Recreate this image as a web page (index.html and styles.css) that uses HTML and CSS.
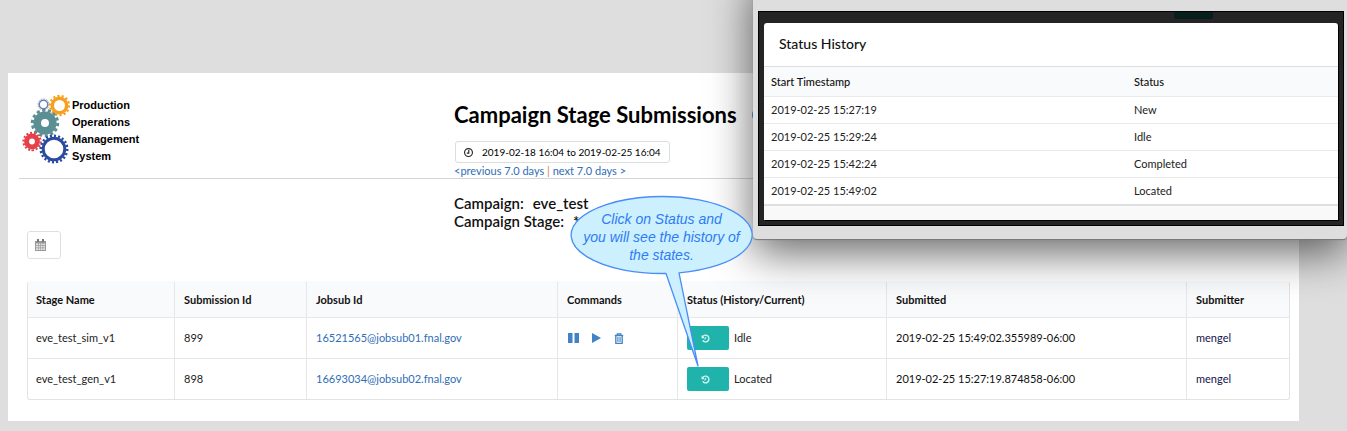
FILE: index.html
```html
<!DOCTYPE html>
<html lang="en">
<head>
<meta charset="utf-8">
<title>Campaign Stage Submissions</title>
<link rel="stylesheet" href="styles.css">
</head>
<body>
<svg class="sprite" aria-hidden="true">
  <symbol id="history" viewBox="0 0 16 16"><path d="M3.2 4.6A6 6 0 1 1 3 11.2" fill="none" stroke="currentColor" stroke-width="2.400"/><path d="M1 1.6v6h6z" fill="currentColor"/><path d="M8.4 4.8v4H5.6" fill="none" stroke="currentColor" stroke-width="1.500"/></symbol>
</svg>
<main class="page">
  <header class="page-header">
    <div class="logo">
      <svg class="gears" width="48" height="72" viewBox="22 94 48 72" aria-hidden="true">
        <g fill="none">
          <circle cx="43.500" cy="104.500" r="4.300" stroke="#6b80bb" stroke-width="1.600"/>
          <circle cx="43.500" cy="104.500" r="5.600" stroke="#8fa0cc" stroke-width="1" pathLength="24" stroke-dasharray="1 1"/>
          <circle cx="59.500" cy="105.500" r="7.200" stroke="#f5a11f" stroke-width="3.400"/>
          <circle cx="59.500" cy="105.500" r="9.600" stroke="#f5a11f" stroke-width="2.200" pathLength="28" stroke-dasharray="1 1"/>
          <circle cx="45" cy="123" r="7.800" stroke="#5b8f93" stroke-width="7.600"/>
          <circle cx="45" cy="123" r="12.700" stroke="#5b8f93" stroke-width="3" pathLength="28" stroke-dasharray="1.100 .9"/>
          <circle cx="32" cy="141.500" r="5.400" stroke="#e5414b" stroke-width="5"/>
          <circle cx="32" cy="141.500" r="8.600" stroke="#e5414b" stroke-width="2.200" pathLength="28" stroke-dasharray="1 1"/>
          <circle cx="54" cy="149" r="10.800" stroke="#2b4ba0" stroke-width="3"/>
          <circle cx="54" cy="149" r="13.200" stroke="#2b4ba0" stroke-width="2.600" pathLength="40" stroke-dasharray="1 1"/>
        </g>
      </svg>
      <div class="logo-text"><span>Production</span><span>Operations</span><span>Management</span><span>System</span></div>
    </div>
    <div class="heading">
      <h1>Campaign Stage Submissions <a href="#help" aria-label="Help"><svg width="18" height="18" viewBox="0 0 18 18"><circle cx="9" cy="9" r="8" fill="#4183c4"/></svg></a></h1>
      <button class="range" type="button"><svg width="9" height="9" viewBox="0 0 16 16" fill="none" stroke="#222" stroke-width="2"><circle cx="8" cy="8" r="7"/><path d="M8.500 3.500V9H5"/></svg>2019-02-18 16:04 to 2019-02-25 16:04</button>
      <nav class="pager"><a href="#prev">&lt;previous 7.0 days</a> <span>|</span> <a href="#next">next 7.0 days &gt;</a></nav>
    </div>
  </header>
  <dl class="info">
    <div><dt>Campaign:</dt><dd>eve_test</dd></div>
    <div><dt>Campaign Stage:</dt><dd>*</dd></div>
  </dl>
  <button class="calendar" type="button" aria-label="Choose dates"><svg width="11" height="12" viewBox="0 0 11 12"><path d="M0 2h11v10H0z" fill="#999"/><path d="M2 0h2v3H2zM7 0h2v3H7z" fill="#777"/><path d="M1 4.500h2v1.700H1zM3.600 4.500h1.700v1.700H3.600zM5.900 4.500h1.700v1.700H5.900zM8.200 4.500H10v1.700H8.200zM1 6.900h2v1.700H1zM3.600 6.900h1.700v1.700H3.600zM5.900 6.900h1.700v1.700H5.900zM8.200 6.900H10v1.700H8.200zM1 9.300h2V11H1zM3.600 9.300h1.700V11H3.600zM5.900 9.300h1.700V11H5.900zM8.200 9.300H10V11H8.200z" fill="#e4e4e4"/></svg></button>
  <table class="jobs">
    <colgroup><col class="c-stage"><col class="c-id"><col class="c-jobsub"><col class="c-cmd"><col class="c-status"><col class="c-date"><col class="c-user"></colgroup>
    <thead><tr><th>Stage Name</th><th>Submission Id</th><th>Jobsub Id</th><th>Commands</th><th>Status (History/Current)</th><th>Submitted</th><th>Submitter</th></tr></thead>
    <tbody>
      <tr><td>eve_test_sim_v1</td><td>899</td><td><a href="#job1">16521565@jobsub01.fnal.gov</a></td>
        <td><div class="commands">
          <button type="button" aria-label="Pause"><svg width="11" height="10" viewBox="0 0 11 10"><path d="M0 0h4.500v10H0zM6.500 0H11v10H6.500z" fill="#4183c4"/></svg></button>
          <button type="button" aria-label="Play"><svg width="11" height="10" viewBox="0 0 11 10"><path d="M1 0l9 5-9 5z" fill="#4183c4"/></svg></button>
          <button type="button" aria-label="Delete"><svg width="10" height="11" viewBox="0 0 10 11" fill="none" stroke="#4183c4"><path d="M.8 2.500h8.400M3.300 2.300V.9h3.400v1.400M1.800 2.800v7.500h6.400V2.800" stroke-width="1.300"/><path d="M3.700 4v5M5 4v5M6.300 4v5" stroke-width=".8"/></svg></button>
        </div></td>
        <td><div class="state"><button type="button" aria-label="Status history"><svg width="9" height="9"><use href="#history"/></svg></button>Idle</div></td>
        <td class="strong">2019-02-25 15:49:02.355989-06:00</td><td class="user">mengel</td></tr>
      <tr><td>eve_test_gen_v1</td><td>898</td><td><a href="#job2">16693034@jobsub02.fnal.gov</a></td><td></td>
        <td><div class="state"><button type="button" aria-label="Status history"><svg width="9" height="9"><use href="#history"/></svg></button>Located</div></td>
        <td class="strong">2019-02-25 15:27:19.874858-06:00</td><td class="user">mengel</td></tr>
    </tbody>
  </table>
</main>

<aside class="window">
  <div class="backdrop">
    <span class="dimmed-button"></span>
    <section class="modal">
      <h2>Status History</h2>
      <table class="history">
        <thead><tr><th>Start Timestamp</th><th>Status</th></tr></thead>
        <tbody>
          <tr><td>2019-02-25 15:27:19</td><td>New</td></tr>
          <tr><td>2019-02-25 15:29:24</td><td>Idle</td></tr>
          <tr><td>2019-02-25 15:42:24</td><td>Completed</td></tr>
          <tr><td>2019-02-25 15:49:02</td><td>Located</td></tr>
        </tbody>
      </table>
      <div class="modal-foot"></div>
    </section>
  </div>
</aside>

<div class="callout">
  <svg width="185" height="172" viewBox="0 0 185 172" aria-hidden="true"><path d="M97 78.450A90.500 38.500 0 1 1 110 77.780L129 171z" fill="#ccf0fd" stroke="#4a8df8" stroke-width="1.300" stroke-linejoin="round"/></svg>
  <p>Click on Status and<br>you will see the history of<br>the states.</p>
</div>
</body>
</html>
```
FILE: styles.css
```css
* { box-sizing: border-box; }
body {
  margin: 0;
  padding: 73px 48px 11px 8px;
  position: relative;
  overflow: hidden;
  background: #dedede;
  color: #222;
  font: 11px/16px Lato, sans-serif;
}
button { font: inherit; color: inherit; cursor: pointer; }
a { color: #2f6db5; text-decoration: none; }
svg { display: block; flex: none; }
.sprite { position: absolute; width: 0; height: 0; }

.page { background: #fff; padding: 0 9px 21px 11px; }
.page-header {
  display: grid;
  grid-template-columns: 435px 1fr;
  height: 106px;
  border-bottom: 1px solid #d4d4d5;
}
.logo { display: flex; align-items: flex-start; gap: 2px; padding: 21px 0 0 3px; }
.logo-text {
  display: flex;
  flex-direction: column;
  padding-top: 3px;
  font: bold 11px/17px "Liberation Sans", Arial, sans-serif;
  color: #000;
}
.heading { display: flex; flex-direction: column; align-items: flex-start; }
h1 {
  display: flex;
  align-items: center;
  gap: 8px;
  margin: 28px 0 12px;
  font-size: 22px;
  line-height: 28px;
  font-weight: 700;
  color: #000;
  white-space: nowrap;
}
h1 a { padding-left: 6px; }
.range {
  display: flex;
  align-items: center;
  gap: 9px;
  height: 22px;
  margin-left: 1px;
  padding: 0 8px;
  border: 1px solid #dcdddd;
  border-radius: 3px;
  background: #fff;
  color: #000;
  font-size: 10px;
}
.pager { line-height: 16px; }
.pager span { color: #c98a3c; }
.info {
  margin: 15px 0 0 435px;
  font-size: 15px;
  line-height: 18px;
  font-weight: 600;
  color: #111;
}
.info div { display: flex; gap: 9px; }
.info dd { margin: 0; }
.calendar {
  display: flex;
  align-items: center;
  width: 34px;
  height: 28px;
  margin: 1px 0 22px 8px;
  padding: 0 7px;
  border: 1px solid #dedfdf;
  border-radius: 3px;
  background: #fff;
}

table { border-collapse: separate; border-spacing: 0; table-layout: fixed; }
th { text-align: left; font-weight: 700; color: #111; background: #f9fafb; }
.jobs {
  width: calc(100% - 8px);
  margin-left: 8px;
  border: 1px solid #e2e3e3;
  border-top-color: #f9fafb;
  border-radius: 3px;
}
.jobs th, .jobs td { padding: 0 9px; border-left: 1px solid #e6e7e8; white-space: nowrap; }
.jobs th:first-child, .jobs td:first-child { padding-left: 8px; border-left: 0; }
.jobs th { height: 35px; }
.jobs td { height: 41px; border-top: 1px solid #e6e7e8; }
.c-stage { width: 146px; }
.c-id { width: 132px; }
.c-jobsub { width: 251px; }
.c-cmd { width: 120px; }
.c-status { width: 209px; }
.c-date { width: 300px; }
.c-user { width: 103px; }
.strong { color: #111; }
.user { color: #14144a; }
.commands { display: flex; align-items: center; gap: 12px; padding-left: 1px; }
.commands button { padding: 0; border: 0; background: none; }
.state { display: flex; align-items: center; gap: 5px; }
.state button {
  display: flex;
  align-items: center;
  width: 42px;
  height: 24px;
  padding: 0 14px;
  border: 0;
  border-radius: 2px;
  background: #1fb3ac;
  color: #d5f5f2;
}

.window {
  position: absolute;
  top: -30px;
  left: 753px;
  right: 0;
  padding: 41px 3px 13px 5px;
  border-radius: 0 0 4px 4px;
  background: #dedede;
  box-shadow: 0 1px 1px #777, 0 14px 44px rgba(0, 0, 0, .6);
}
.backdrop { position: relative; padding: 11px 5px 5px; border: 1px solid #000; background: #242424; }
.dimmed-button {
  position: absolute;
  top: 0;
  right: 130px;
  width: 39px;
  height: 7px;
  border-radius: 0 0 2px 2px;
  background: #061f1d;
}
.modal { border-radius: 3px 3px 0 0; background: #fff; box-shadow: 1px 1px 0 #000; }
h2 { margin: 0; padding: 11px 15px 12px; font-size: 14px; line-height: 20px; font-weight: 500; color: #111; }
.history { width: 100%; border-top: 1px solid #dcddde; border-bottom: 2px solid #dedfdf; }
.history th, .history td { padding: 0 7px; }
.history th:first-child { width: 363px; }
.history th { height: 29px; font-weight: 500; }
.history td { height: 27px; border-top: 1px solid #e9eaea; }
.modal-foot { height: 14px; background: #f9f9f9; }

.callout { position: absolute; left: 569px; top: 195px; width: 185px; }
.callout p {
  position: absolute;
  top: 15px;
  left: 0;
  width: 100%;
  margin: 0;
  text-align: center;
  font: italic 14px/18px "Liberation Sans", Arial, sans-serif;
  color: #2f7bf6;
  white-space: nowrap;
}
```
